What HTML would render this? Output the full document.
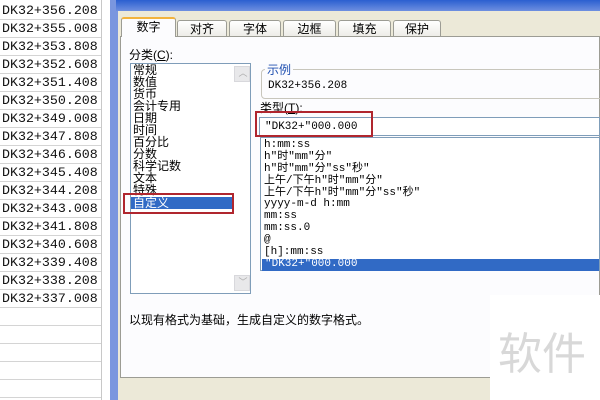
<!DOCTYPE html>
<html><head><meta charset="utf-8"><style>
*{margin:0;padding:0;box-sizing:border-box}
body{width:600px;height:400px;overflow:hidden;background:#fff;position:relative;font-family:"Liberation Sans","Noto Sans CJK SC",sans-serif;font-size:12px;color:#000}
.a{position:absolute}
.cells div{position:absolute;left:0;width:101px;height:18px;border-bottom:1px solid #d4d4d4;font-family:"Liberation Mono","Noto Sans CJK SC",monospace;font-size:13.3px;line-height:18px;padding-left:2px;color:#111}
.mono{font-family:"Liberation Mono","Noto Sans CJK SC",monospace;font-size:11px}
.tab{position:absolute;top:20px;height:17px;border:1px solid #9c9c94;border-bottom:none;background:linear-gradient(#fff,#ecebe6);text-align:center;font-size:12px;line-height:16px;border-radius:3px 3px 0 0}
.cat div{height:12px;line-height:12px;font-size:12px;padding-left:2px}
.lst div{height:11.9px;line-height:11.9px;padding-left:3px;white-space:nowrap}
</style></head><body>
<div class="cells">
<div style="top:2px">DK32+356.208</div><div style="top:20px">DK32+355.008</div><div style="top:38px">DK32+353.808</div><div style="top:56px">DK32+352.608</div><div style="top:74px">DK32+351.408</div><div style="top:92px">DK32+350.208</div><div style="top:110px">DK32+349.008</div><div style="top:128px">DK32+347.808</div><div style="top:146px">DK32+346.608</div><div style="top:164px">DK32+345.408</div><div style="top:182px">DK32+344.208</div><div style="top:200px">DK32+343.008</div><div style="top:218px">DK32+341.808</div><div style="top:236px">DK32+340.608</div><div style="top:254px">DK32+339.408</div><div style="top:272px">DK32+338.208</div><div style="top:290px">DK32+337.008</div>
<div style="top:308px"></div><div style="top:326px"></div><div style="top:344px"></div><div style="top:362px"></div><div style="top:380px"></div>
</div>
<div class="a" style="left:101px;top:0;width:1px;height:400px;background:#c8c8c8"></div>
<div class="a" style="left:110px;top:0;width:490px;height:400px;background:#7a96df"></div>
<div class="a" style="left:116px;top:0;width:484px;height:11px;background:linear-gradient(#2b5fd0,#6e8fe0)"></div>
<div class="a" style="left:118px;top:11px;width:482px;height:389px;background:#ece9d8"></div>
<div class="tab" style="left:121px;top:17px;height:20px;width:55px;border-top:2px solid #f2b33d;background:#fcfcfe;z-index:2">数字</div>
<div class="tab" style="left:177px;width:50px">对齐</div>
<div class="tab" style="left:229px;width:52px">字体</div>
<div class="tab" style="left:283px;width:53px">边框</div>
<div class="tab" style="left:338px;width:53px">填充</div>
<div class="tab" style="left:393px;width:48px">保护</div>
<div class="a" style="left:120px;top:36px;width:480px;height:342px;background:#fcfcfe;border:1px solid #9c9c94"></div>
<div class="a" style="left:129px;top:46px">分类(<u>C</u>):</div>
<div class="a cat" style="left:130px;top:63px;width:121px;height:231px;background:#fff;border:1px solid #7f9db9">
<div>常规</div><div>数值</div><div>货币</div><div>会计专用</div><div>日期</div><div>时间</div><div>百分比</div><div>分数</div><div>科学记数</div><div>文本</div><div>特殊</div><div style="background:#316ac5;color:#fff;width:101px;margin-top:1px">自定义</div>
<div class="a" style="left:103px;top:2px;width:16px;height:16px;background:#e8e8ea;border:1px solid #d8d8dc;color:#aaa;font-size:9px;text-align:center">︿</div>
<div class="a" style="left:103px;top:211px;width:16px;height:16px;background:#e8e8ea;border:1px solid #d8d8dc;color:#aaa;font-size:9px;text-align:center">﹀</div>
</div>
<div class="a" style="left:123px;top:193px;width:111px;height:21px;border:2px solid #b0262e"></div>
<div class="a" style="left:261px;top:69px;width:345px;height:30px;border:1px solid #c8c6bc;border-radius:4px"></div>
<div class="a" style="left:265px;top:61px;background:#fcfcfe;color:#1f4fb0;padding:0 2px">示例</div>
<div class="a mono" style="left:268px;top:80px">DK32+356.208</div>
<div class="a" style="left:260px;top:99px">类型(<u>T</u>):</div>
<div class="a mono" style="left:259px;top:117px;width:341px;height:19px;background:#fff;border:1px solid #7f9db9;padding:3px 0 0 5px">"DK32+"000.000</div>
<div class="a" style="left:255px;top:111px;width:118px;height:26px;border:2px solid #b0262e"></div>
<div class="a lst mono" style="left:260px;top:137px;width:340px;height:134px;background:#fff;border:1px solid #7f9db9;padding-top:2px">
<div>h:mm:ss</div><div>h"时"mm"分"</div><div>h"时"mm"分"ss"秒"</div><div>上午/下午h"时"mm"分"</div><div>上午/下午h"时"mm"分"ss"秒"</div><div>yyyy-m-d h:mm</div><div>mm:ss</div><div>mm:ss.0</div><div>@</div><div>[h]:mm:ss</div><div style="background:#316ac5;color:#fff;margin-left:1px">"DK32+"000.000</div>
</div>
<div class="a" style="left:129px;top:311px">以现有格式为基础，生成自定义的数字格式。</div>
<div class="a" style="left:490px;top:295px;width:110px;height:105px;background:#fff"></div>
<div class="a" style="left:498px;top:318px;font-size:44px;color:#d8d8d8;white-space:nowrap">软件</div>
</body></html>
